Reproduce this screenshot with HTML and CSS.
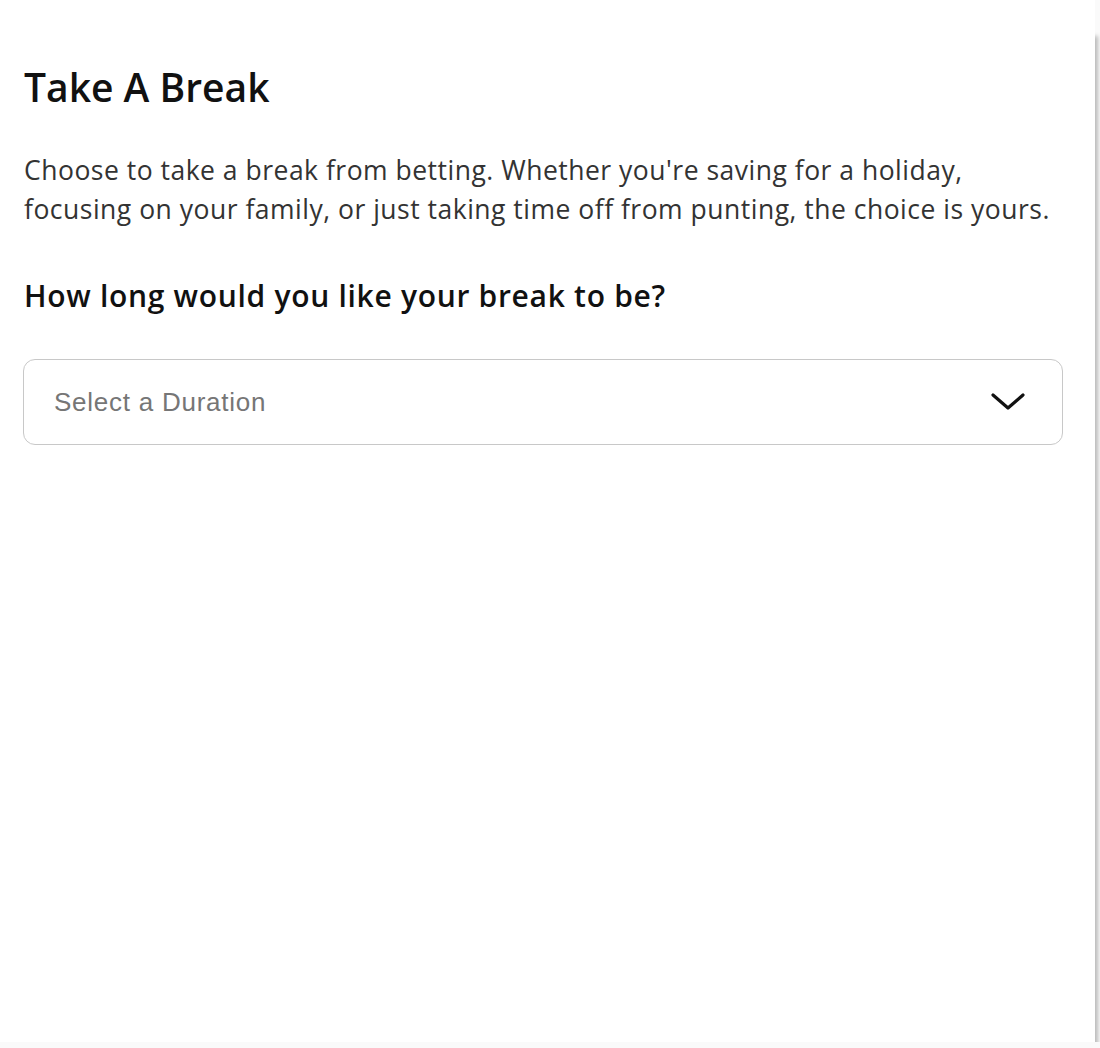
FILE: index.html
```html
<!DOCTYPE html>
<html lang="en">
<head>
    <meta charset="UTF-8">
    <meta name="viewport" content="width=device-width, initial-scale=1.0">
    <title>Take A Break</title>
    <link rel="stylesheet" href="styles.css">
</head>
<body>

    <!-- Take A Break Panel -->
    <div class="break-panel">
        <h1>Take A Break</h1>
        <p class="intro">Choose to take a break from betting. Whether you're saving for a holiday, focusing on your family, or just taking time off from punting, the choice is yours.</p>

        <h2>How long would you like your break to be?</h2>

        <!-- Duration Select -->
        <div class="duration-select">
            <span class="placeholder">Select a Duration</span>
            <svg class="chevron" width="36" height="20" viewBox="0 0 36 20">
                <path d="M3 3 L18 16 L33 3" fill="none" stroke="#111" stroke-width="3.2" stroke-linecap="round" stroke-linejoin="round"/>
            </svg>
        </div>
    </div>

</body>
</html>
```

FILE: styles.css
```css
/* Page */
body {
    margin: 0;
    background-color: #fafafa;
    font-family: "Open Sans", Arial, sans-serif;
    overflow: hidden;
}

/* Panel */
.break-panel {
    background: #fff;
    width: 1095px;
    height: 1042px;
    box-sizing: border-box;
    padding: 60px 24px 0 24px;
    box-shadow: 3px 36px 4px rgba(0, 0, 0, 0.25);
}

.break-panel h1 {
    margin: 0;
    font-size: 39px;
    font-weight: 600;
    color: #111;
}

.intro {
    margin: 38px 0 0;
    font-size: 26.5px;
    letter-spacing: 0.5px;
    line-height: 38.5px;
    color: #333;
}

.break-panel h2 {
    margin: 47px 0 0;
    font-size: 30px;
    letter-spacing: 0.7px;
    font-weight: 600;
    color: #111;
}

/* Duration Select */
.duration-select {
    margin: 43px 0 0 -1px;
    width: 1040px;
    height: 86px;
    box-sizing: border-box;
    border: 1.5px solid #c8c8c8;
    border-radius: 12px;
    display: flex;
    align-items: center;
    justify-content: space-between;
    padding: 0 36px 0 30px;
}

.placeholder {
    font-family: "Liberation Sans", Arial, sans-serif;
    font-size: 26px;
    letter-spacing: 0.75px;
    color: #767676;
}

.chevron {
    display: block;
}
```
